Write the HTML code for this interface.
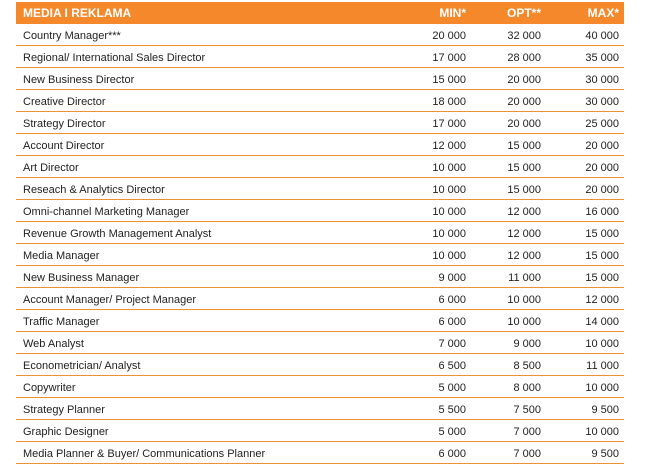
<!DOCTYPE html>
<html><head><style>
body{margin:0;background:#fff;width:650px;height:476px;overflow:hidden;font-family:"Liberation Sans",sans-serif;}
.t{position:absolute;left:16px;top:2px;width:608px;}
.h{height:22px;background:#f4882a;color:#fff;font-weight:bold;font-size:12px;position:relative;}
.r{height:21px;border-bottom:1px solid #ec9236;position:relative;font-size:11px;color:#222;}
.c{position:absolute;top:2px;line-height:21px;white-space:nowrap;}
.h .c{top:0;line-height:23px;}
.n{left:7px}
.a{right:158px}.b{right:83px}.m{right:5px}
</style></head><body>
<div class="t" id="t">
<div class="h"><span class="c n">MEDIA I REKLAMA</span><span class="c a">MIN*</span><span class="c b">OPT**</span><span class="c m">MAX*</span></div>
</div>
<script>
var d=[["Country Manager***","20 000","32 000","40 000"],["Regional/ International Sales Director","17 000","28 000","35 000"],["New Business Director","15 000","20 000","30 000"],["Creative Director","18 000","20 000","30 000"],["Strategy Director","17 000","20 000","25 000"],["Account Director","12 000","15 000","20 000"],["Art Director","10 000","15 000","20 000"],["Reseach &amp; Analytics Director","10 000","15 000","20 000"],["Omni-channel Marketing Manager","10 000","12 000","16 000"],["Revenue Growth Management Analyst","10 000","12 000","15 000"],["Media Manager","10 000","12 000","15 000"],["New Business Manager","9 000","11 000","15 000"],["Account Manager/ Project Manager","6 000","10 000","12 000"],["Traffic Manager","6 000","10 000","14 000"],["Web Analyst","7 000","9 000","10 000"],["Econometrician/ Analyst","6 500","8 500","11 000"],["Copywriter","5 000","8 000","10 000"],["Strategy Planner","5 500","7 500","9 500"],["Graphic Designer","5 000","7 000","10 000"],["Media Planner &amp; Buyer/ Communications Planner","6 000","7 000","9 500"]];
var h="";d.forEach(function(r){h+='<div class="r"><span class="c n">'+r[0]+'</span><span class="c a">'+r[1]+'</span><span class="c b">'+r[2]+'</span><span class="c m">'+r[3]+'</span></div>';});
document.getElementById("t").insertAdjacentHTML("beforeend",h);
</script>
</body></html>
